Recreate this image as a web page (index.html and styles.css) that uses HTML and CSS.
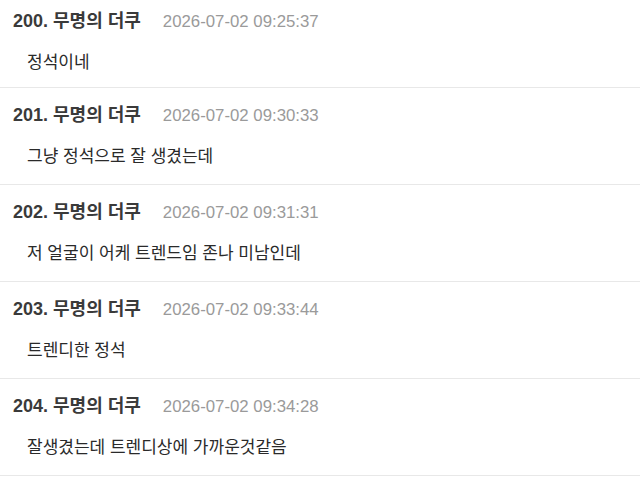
FILE: index.html
```html
<!DOCTYPE html>
<html lang="ko">
<head>
<meta charset="utf-8">
<title>댓글</title>
<link rel="stylesheet" href="styles.css">
</head>
<body>
<ul class="comments">
  <li class="comment">
    <div class="meta"><span class="author">200. 무명의 더쿠</span><span class="date">2026-07-02 09:25:37</span></div>
    <p class="body">정석이네</p>
  </li>
  <li class="comment">
    <div class="meta"><span class="author">201. 무명의 더쿠</span><span class="date">2026-07-02 09:30:33</span></div>
    <p class="body">그냥 정석으로 잘 생겼는데</p>
  </li>
  <li class="comment">
    <div class="meta"><span class="author">202. 무명의 더쿠</span><span class="date">2026-07-02 09:31:31</span></div>
    <p class="body">저 얼굴이 어케 트렌드임 존나 미남인데</p>
  </li>
  <li class="comment">
    <div class="meta"><span class="author">203. 무명의 더쿠</span><span class="date">2026-07-02 09:33:44</span></div>
    <p class="body">트렌디한 정석</p>
  </li>
  <li class="comment">
    <div class="meta"><span class="author">204. 무명의 더쿠</span><span class="date">2026-07-02 09:34:28</span></div>
    <p class="body">잘생겼는데 트렌디상에 가까운것같음</p>
  </li>
</ul>
</body>
</html>
```
FILE: styles.css
```css
html, body {
  margin: 0;
  padding: 0;
  background: #ffffff;
}

body {
  font-family: "Liberation Sans", "Noto Sans CJK KR", sans-serif;
  color: #333333;
  overflow: hidden;
}

.comments {
  list-style: none;
  margin: -6px 0 0;
  padding: 0;
}

/* each comment block is 97px tall including its divider */
.comment {
  padding: 15px 13px 0;
  height: 81px;
  border-bottom: 1px solid #e8e8e8;
}

.comment:first-child {
  height: 78px;
}

.meta {
  display: flex;
  align-items: baseline;
  gap: 22px;
  line-height: 24px;
}

.author {
  font-size: 18px;
  font-weight: bold;
  color: #3a3a3a;
}

.date {
  font-size: 16.8px;
  color: #9a9a9a;
}

.body {
  margin: 17px 0 0 14px;
  font-size: 17px;
  line-height: 24px;
  color: #2a2a2a;
}
```
